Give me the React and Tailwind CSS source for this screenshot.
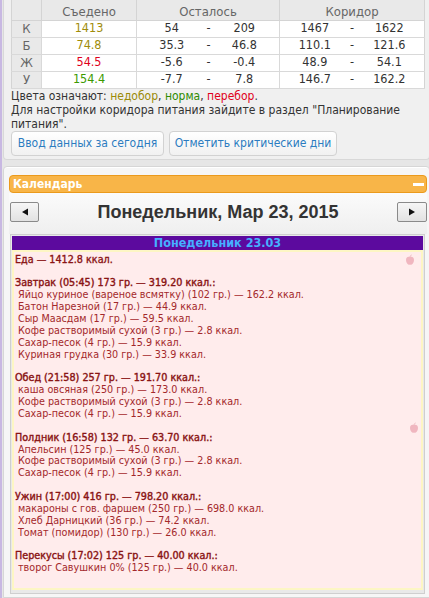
import React from "react";

const rows = [
  { l: "К", e: "1413", ec: "text-[#a08c0a]", r1: "54", r2: "209", k1: "1467", k2: "1622" },
  { l: "Б", e: "74.8", ec: "text-[#a08c0a]", r1: "35.3", r2: "46.8", k1: "110.1", k2: "121.6" },
  { l: "Ж", e: "54.5", ec: "text-[#e0001a]", r1: "-5.6", r2: "-0.4", k1: "48.9", k2: "54.1" },
  { l: "У", e: "154.4", ec: "text-[#3b9a00]", r1: "-7.7", r2: "7.8", k1: "146.7", k2: "162.2" },
];

const meals = [
  {
    h: "Завтрак (05:45) 173 гр. — 319.20 ккал.:",
    items: [
      "Яйцо куриное (вареное всмятку) (102 гр.) — 162.2 ккал.",
      "Батон Нарезной (17 гр.) — 44.9 ккал.",
      "Сыр Маасдам (17 гр.) — 59.5 ккал.",
      "Кофе растворимый сухой (3 гр.) — 2.8 ккал.",
      "Сахар-песок (4 гр.) — 15.9 ккал.",
      "Куриная грудка (30 гр.) — 33.9 ккал.",
    ],
  },
  {
    h: "Обед (21:58) 257 гр. — 191.70 ккал.:",
    items: [
      "каша овсяная (250 гр.) — 173.0 ккал.",
      "Кофе растворимый сухой (3 гр.) — 2.8 ккал.",
      "Сахар-песок (4 гр.) — 15.9 ккал.",
    ],
  },
  {
    h: "Полдник (16:58) 132 гр. — 63.70 ккал.:",
    items: [
      "Апельсин (125 гр.) — 45.0 ккал.",
      "Кофе растворимый сухой (3 гр.) — 2.8 ккал.",
      "Сахар-песок (4 гр.) — 15.9 ккал.",
    ],
  },
  {
    h: "Ужин (17:00) 416 гр. — 798.20 ккал.:",
    items: [
      "макароны с гов. фаршем (250 гр.) — 698.0 ккал.",
      "Хлеб Дарницкий (36 гр.) — 74.2 ккал.",
      "Томат (помидор) (130 гр.) — 26.0 ккал.",
    ],
  },
  {
    h: "Перекусы (17:02) 125 гр. — 40.00 ккал.:",
    items: ["творог Савушкин 0% (125 гр.) — 40.0 ккал."],
  },
];

function Apple({ className }) {
  return (
    <svg className={className} width="12" height="12" viewBox="0 0 12 12">
      <path d="M6 3.2C4.8 2.4 2 2.6 2 6c0 2.8 2 4.8 3 4.8.5 0 .7-.3 1-.3s.5.3 1 .3c1 0 3-2 3-4.8 0-3.4-2.8-3.6-4-2.8z" fill="#f0b6bf" />
      <path d="M6 3.3C6 2 6.8 1.2 7.6 1" stroke="#eab0b8" strokeWidth="0.9" fill="none" />
    </svg>
  );
}

export default function App() {
  const td = "h-[17px] p-0 text-center border-b border-[#d9d9d9]";
  return (
    <div className="w-[429px] h-[598px] overflow-hidden bg-[#e6e6e6] flex font-['DejaVu_Sans_Condensed','DejaVu_Sans',sans-serif] text-[12px] text-[#333]">
      <div className="w-[2px] shrink-0 bg-[#c8b8e2]" />
      <div className="flex-1 flex flex-col pl-[1px]">
        {/* top panel */}
        <div className="bg-[#f0f0f0] border-x border-b border-[#d8d8d8] rounded-b-[4px] pl-[7px] pr-[4px] pb-[3px]">
          <table className="table-fixed border-collapse w-[413px] border border-t-0 border-[#d4d4d4] leading-none">
            <colgroup>
              <col className="w-[30px]" />
              <col className="w-[95px]" />
              <col className="w-[70px]" />
              <col className="w-[3px]" />
              <col className="w-[70px]" />
              <col className="w-[70px]" />
              <col className="w-[5px]" />
              <col className="w-[70px]" />
            </colgroup>
            <thead>
              <tr className="bg-[#e9e9e9] text-[#666] text-[13px]">
                <th className="h-[20px] p-0 pt-[4px] font-normal border-b border-r border-[#d4d4d4]" />
                <th className="p-0 pt-[4px] font-normal border-b border-r border-[#d4d4d4]">Съедено</th>
                <th colSpan={3} className="p-0 pt-[4px] font-normal border-b border-r border-[#d4d4d4]">Осталось</th>
                <th colSpan={3} className="p-0 pt-[4px] font-normal border-b border-[#d4d4d4]">Коридор</th>
              </tr>
            </thead>
            <tbody className="text-[12.5px]">
              {rows.map((r) => (
                <tr key={r.l}>
                  <td className={`${td} bg-[#e9e9e9] text-[#666] text-[13px] border-r`}>{r.l}</td>
                  <td className={`${td} bg-white border-r ${r.ec}`}>{r.e}</td>
                  <td className={`${td} bg-white`}>{r.r1}</td>
                  <td className={`${td} bg-white`}>-</td>
                  <td className={`${td} bg-white border-r`}>{r.r2}</td>
                  <td className={`${td} bg-white`}>{r.k1}</td>
                  <td className={`${td} bg-white`}>-</td>
                  <td className={`${td} bg-white`}>{r.k2}</td>
                </tr>
              ))}
            </tbody>
          </table>
          <div className="leading-[14px]">
            <div>
              Цвета означают: <span className="text-[#9a8a08]">недобор</span>,{" "}
              <span className="text-[#2e8b00]">норма</span>, <span className="text-[#e0001a]">перебор</span>.
            </div>
            <div>
              Для настройки коридора питания зайдите в раздел "Планирование
              <br />
              питания".
            </div>
          </div>
          <div className="flex gap-[5px]">
            <div className="w-[153px] h-[25px] flex items-center justify-center rounded-[4px] border border-[#d2d2d2] bg-gradient-to-b from-white to-[#f1f1f1] text-[#2b7cc0]">
              Ввод данных за сегодня
            </div>
            <div className="w-[168px] h-[25px] flex items-center justify-center rounded-[4px] border border-[#d2d2d2] bg-gradient-to-b from-white to-[#f1f1f1] text-[#2b7cc0]">
              Отметить критические дни
            </div>
          </div>
        </div>

        {/* calendar panel */}
        <div className="mt-[6px] flex-1 border border-[#d6d6d6] rounded-t-[4px] bg-[#f6f6f6] shadow-[inset_0_1px_0_#ffffff] pt-[8px] pl-[5px] pr-[2px]">
          <div className="h-[18px] rounded-[4px] border border-[#eb9a1c] bg-[#f8b548] flex items-center justify-between pl-[3px] pr-[2px]">
            <span className="text-white font-bold text-[12px] leading-none">Календарь</span>
            <span className="w-[11px] h-[3px] bg-white mt-[2px]" />
          </div>
          <div className="bg-gradient-to-b from-[#fbfbfb] to-[#efefef] pt-[9px] pb-[12px] pl-[1px] pr-0">
            <div className="flex items-center justify-between">
              <div className="w-[29px] h-[20px] border border-[#8a8a8a] rounded-[2px] bg-gradient-to-b from-[#f6f6f6] to-[#e2e2e2] flex items-center justify-center">
                <svg width="8" height="8" viewBox="0 0 8 8"><path d="M7 0.5V7.5L1 4z" fill="#111" /></svg>
              </div>
              <div className="font-['Liberation_Sans',Arial,sans-serif] font-bold text-[18px] text-[#333] leading-none">
                Понедельник, Мар 23, 2015
              </div>
              <div className="w-[30px] h-[20px] border border-[#8a8a8a] rounded-[2px] bg-gradient-to-b from-[#f6f6f6] to-[#e2e2e2] flex items-center justify-center">
                <svg width="8" height="8" viewBox="0 0 8 8"><path d="M1 0.5V7.5L7 4z" fill="#111" /></svg>
              </div>
            </div>
          </div>
          <div className="ml-[1px] mr-[2px] border border-[#cfcfcf] bg-[#e9e9e9] p-[1px] pb-[3px]">
            <div className="h-[14px] bg-[#5c0a9e] text-[#46b0ff] font-bold text-[12.5px] leading-[14px] text-center">
              Понедельник 23.03
            </div>
            <div className="relative border-2 border-[#fdf6c4] bg-[#ffecec] text-[#a3282b] text-[10.7px] leading-[11.88px] pl-[1px] pt-[2px] pb-[14px]">
              <Apple className="absolute right-[5px] top-[2px]" />
              <Apple className="absolute right-[1px] top-[170px]" />
              <div className="text-[#8a1414] [-webkit-text-stroke:0.35px_#8a1414]">Еда — 1412.8 ккал.</div>
              {meals.map((m) => (
                <div key={m.h}>
                  <div className="h-[11.88px]" />
                  <div className="text-[#8a1414] [-webkit-text-stroke:0.4px_#8a1414]">{m.h}</div>
                  {m.items.map((it) => (
                    <div key={it} className="pl-[3px]">{it}</div>
                  ))}
                </div>
              ))}
            </div>
          </div>
        </div>
      </div>
    </div>
  );
}
